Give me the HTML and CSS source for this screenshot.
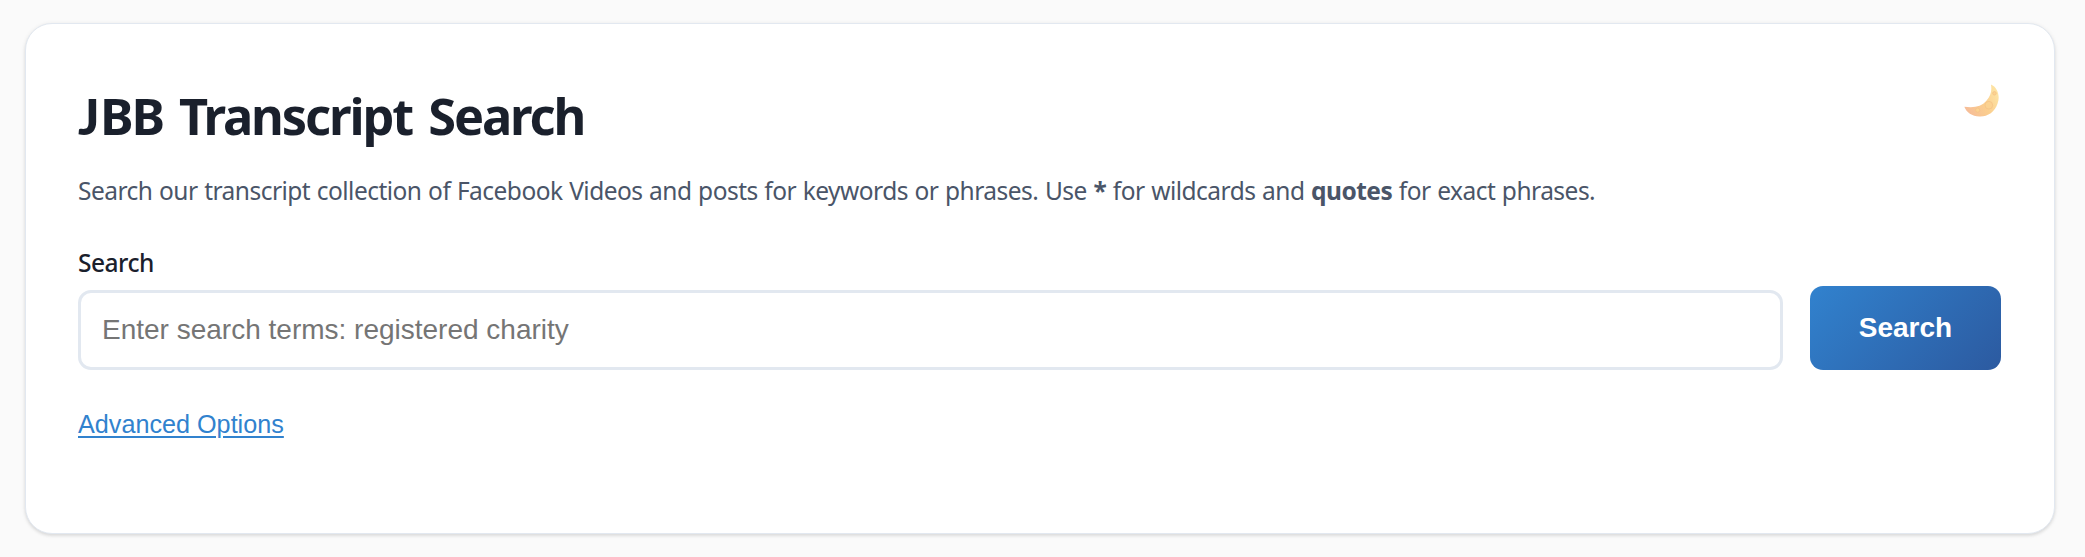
FILE: index.html
```html
<!DOCTYPE html>
<html lang="en">
<head>
<meta charset="utf-8">
<title>JBB Transcript Search</title>
<link rel="stylesheet" href="styles.css">
</head>
<body>
<main class="card">
  <header class="header">
    <h1 class="title"><span class="initial">J</span>BB Transcript Search</h1>
    <button class="theme-toggle" aria-label="Toggle dark mode">
      <svg class="moon" viewBox="0 0 100 93">
        <defs>
          <linearGradient id="moonFill" x1="0" y1="0.7" x2="1" y2="0.2">
            <stop offset="0" stop-color="#f6bd98"/>
            <stop offset="0.5" stop-color="#fbce8e"/>
            <stop offset="1" stop-color="#fde6a6"/>
          </linearGradient>
        </defs>
        <path d="M77 1C96 9 104 34 96 55C88 80 67 93 44 92C23 91 7 81 1 64C28 68 50 64 64 47C77 33 80 18 77 1Z" fill="url(#moonFill)"/>
        <g fill="#fbd291" stroke="#f3c084" stroke-width="2">
          <circle cx="71" cy="60" r="11"/>
          <circle cx="39" cy="74" r="6"/>
          <circle cx="87" cy="26" r="5"/>
        </g>
      </svg>
    </button>
  </header>
  <p class="intro">Search our transcript collection of Facebook Videos and posts for keywords or phrases. Use <strong>*</strong> for wildcards and <strong>quotes</strong> for exact phrases.</p>
  <form class="search-form">
    <div class="field">
      <label class="label" for="q">Search</label>
      <input class="input" id="q" type="text" placeholder="Enter search terms: registered charity">
    </div>
    <button class="submit" type="button">Search</button>
  </form>
  <button class="advanced">Advanced Options</button>
</main>
</body>
</html>
```
FILE: styles.css
```css
* { box-sizing: border-box; }

body {
  margin: 0;
  padding: 23px 30px 23px 25px;
  height: 557px;
  overflow: hidden;
  background: #fafafa;
  font-family: "Noto Sans", "Open Sans", sans-serif;
}

.card {
  height: 511px;
  padding: 52px 53px 0 52px;
  border: 1px solid #e2e8f0;
  border-radius: 27px;
  background: #fff;
  box-shadow: 0 1px 4px rgba(0, 0, 0, 0.1), 0 2px 3px rgba(0, 0, 0, 0.06);
}

.header {
  display: flex;
  justify-content: space-between;
  height: 82px;
}

.title {
  margin: 0;
  padding-top: 5px;
  color: #1a202c;
  font-size: 50.5px;
  font-weight: 700;
  line-height: 70px;
  letter-spacing: -2.1px;
  word-spacing: 5px;
  white-space: nowrap;
}

.initial {
  display: inline-block;
  width: 22px;
  font-family: Lato, sans-serif;
  font-size: 50px;
  font-weight: 900;
  line-height: 1;
}

.theme-toggle {
  width: 37px;
  height: 41px;
  padding: 7px 2px 0 0;
  border: 0;
  background: none;
}

.moon { display: block; width: 35px; height: 33px; }

.intro {
  margin: 0;
  height: 84px;
  padding-top: 15px;
  color: #4a5568;
  font-size: 24.5px;
  line-height: 36px;
  letter-spacing: -0.52px;
  word-spacing: 0.75px;
  white-space: nowrap;
}

.search-form {
  display: flex;
  align-items: flex-end;
  gap: 27px;
  height: 128px;
}

.field {
  display: flex;
  flex: 1;
  flex-direction: column;
}

.label {
  height: 45px;
  color: #1a202c;
  font-size: 24.5px;
  font-weight: 500;
  line-height: 36px;
  letter-spacing: -0.5px;
}

.input {
  width: 100%;
  height: 80px;
  padding: 0 21px;
  border: 3px solid #e2e8f0;
  border-radius: 13px;
  background: #fff;
  font: 28px "Liberation Sans", Arial, sans-serif;
}

.input::placeholder { color: #757575; }

.submit {
  width: 191px;
  height: 84px;
  padding: 0 0 1px;
  border: 0;
  border-radius: 13px;
  background: linear-gradient(135deg, #3182ce, #2c5aa0);
  color: #fff;
  font: 700 28px "Liberation Sans", Arial, sans-serif;
}

.advanced {
  display: block;
  margin-top: 38px;
  padding: 0;
  border: 0;
  background: none;
  color: #3182ce;
  font: 25.2px/32px "Liberation Sans", Arial, sans-serif;
  text-decoration: underline;
  text-decoration-thickness: 2px;
  text-underline-offset: 3px;
}
```
